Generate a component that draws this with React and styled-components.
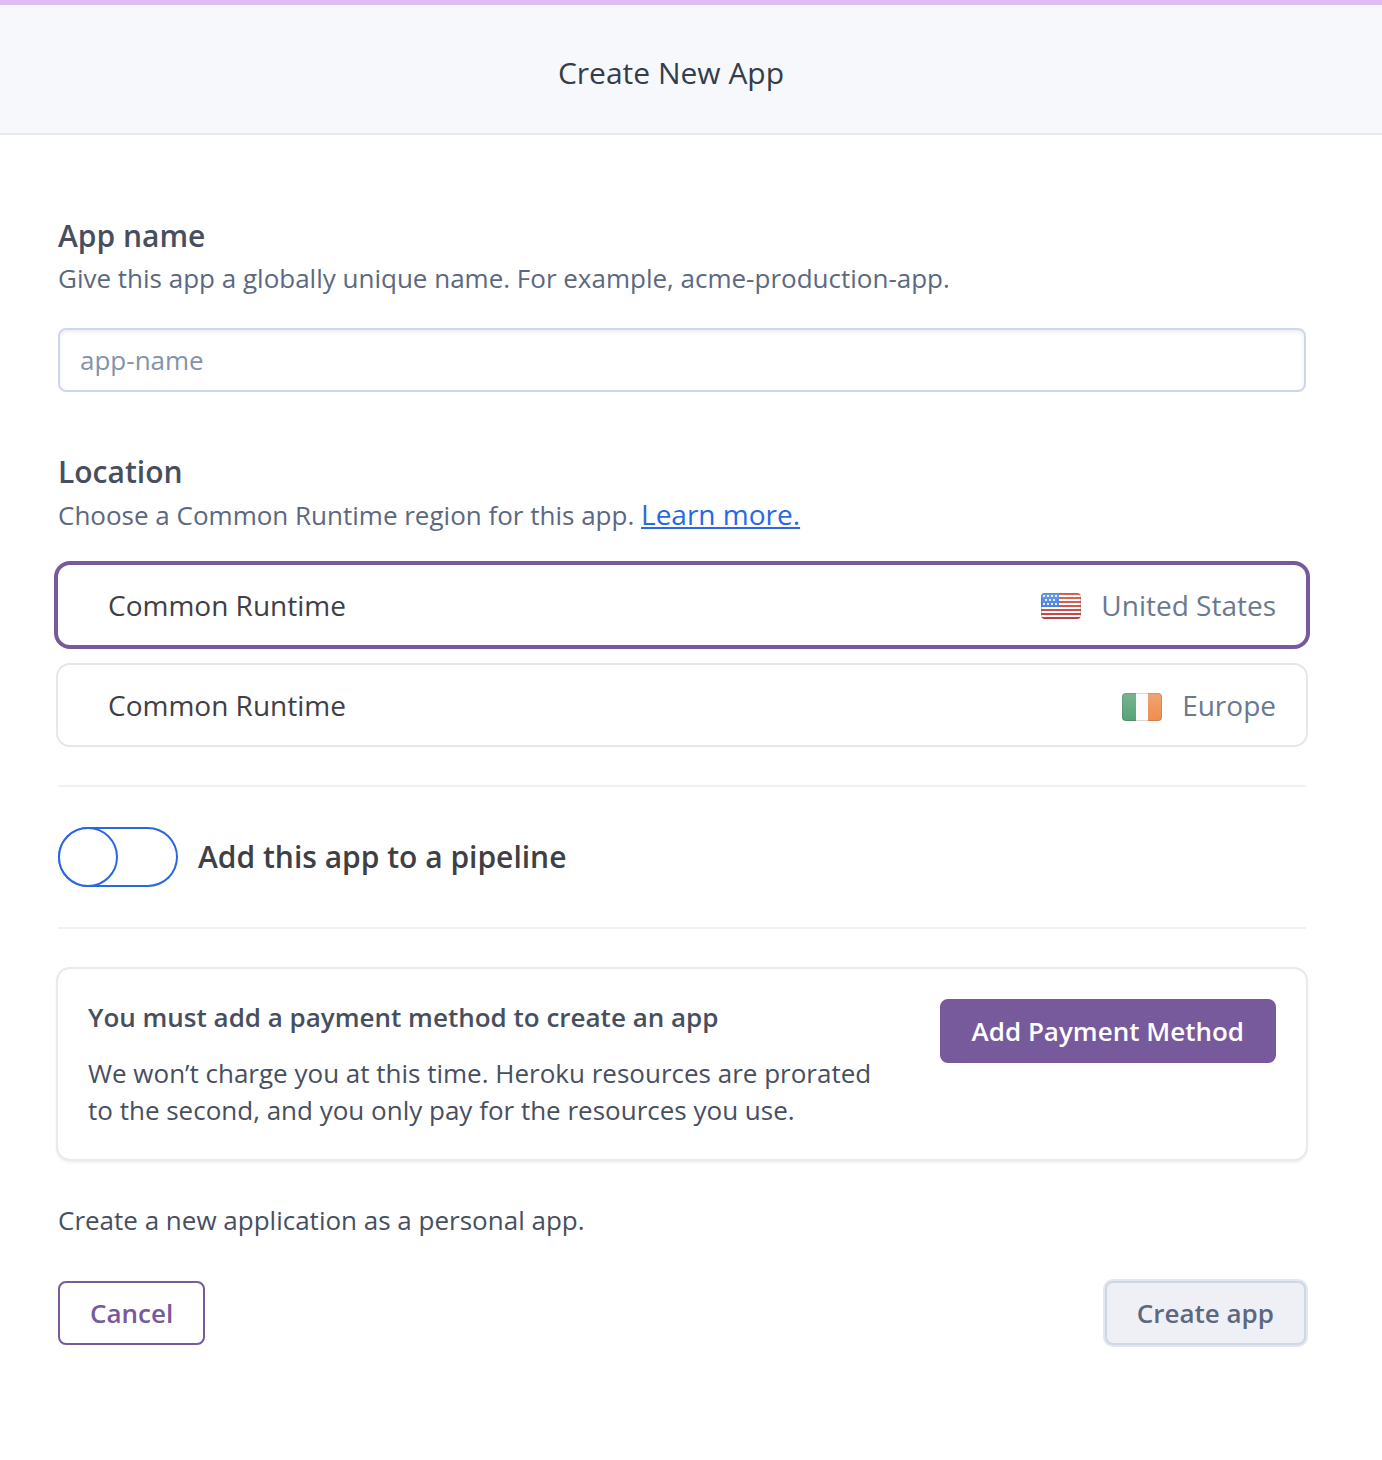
import React, { useState } from 'react';
import styled, { createGlobalStyle } from 'styled-components';

const GlobalStyle = createGlobalStyle`
  *, *::before, *::after {
    box-sizing: border-box;
  }

  body {
    margin: 0;
    background: #ffffff;
    color: #474f5f;
    font-family: 'Open Sans', 'Noto Sans', sans-serif;
    font-size: 26px;
    line-height: 36px;
  }
`

const Header = styled.header`
  border-top: 5px solid #dfbbf8;
  border-bottom: 2px solid #e7ebf0;
  padding: 48px 98px 40px 58px;
  background: #f7f8fc;
  text-align: center;
`

const Title = styled.h1`
  margin: 0;
  color: #353d4b;
  font-size: 30px;
  font-weight: 400;
  line-height: 40px;
`

const Form = styled.form`
  display: flex;
  flex-direction: column;
  padding: 81px 76px 112px 58px;
`

const Field = styled.div`
  display: flex;
  flex-direction: column;
  margin-bottom: 60px;
`

const FieldSet = styled.fieldset`
  min-width: 0;
  margin: 0;
  border: 0;
  padding: 0;
`

const FieldTitle = styled.span`
  display: block;
  font-size: 30px;
  font-weight: 600;
  line-height: 40px;
`

const Hint = styled.p`
  margin: 4px 0 32px;
  color: #5b6880;
`

const Link = styled.a`
  color: #2a67e2;
  font-size: 28px;
  text-decoration: underline;
`

const TextInput = styled.input`
  width: 100%;
  height: 64px;
  border: 2px solid #cfd7e6;
  border-radius: 8px;
  padding: 0 20px;
  background: #ffffff;
  box-shadow: inset 0 2px 4px #e9edf5;
  color: #474f5f;
  font: inherit;

  &::placeholder {
    color: #8493ab;
    opacity: 1;
  }
`

const HiddenInput = styled.input`
  appearance: none;
  position: absolute;
  width: 1px;
  height: 1px;
  margin: 0;
  opacity: 0;
`

const Regions = styled.div`
  display: flex;
  flex-direction: column;
  gap: 20px;
`

const Region = styled.label`
  display: flex;
  align-items: center;
  gap: 20px;
  height: 80px;
  border-radius: 12px;
  padding: 0 30px 0 50px;
  box-shadow: 0 0 0 ${props => props.$selected ? '4px #765a9b' : '2px #e3e7ee'};
  color: #6b7890;
  font-size: 28px;
  cursor: pointer;
`

const Runtime = styled.span`
  flex: 1;
  color: #3f4045;
`

const FlagSvg = styled.svg`
  flex-shrink: 0;
  width: 40px;
  height: 28px;
  margin-top: 4px;
`

const Divider = styled.hr`
  width: 100%;
  height: 2px;
  margin: 40px 0;
  border: 0;
  background: #f0f1f5;
`

const PipelineToggle = styled.label`
  display: flex;
  align-items: center;
  align-self: flex-start;
  gap: 20px;
  color: #3f4045;
  font-size: 30px;
  font-weight: 600;
  cursor: pointer;
`

const Track = styled.span`
  display: flex;
  justify-content: ${props => props.$on ? 'flex-end' : 'flex-start'};
  width: 120px;
  height: 60px;
  border-radius: 30px;
  background: ${props => props.$on ? '#2a67e2' : '#ffffff'};
  box-shadow: inset 0 0 0 2px #2a67e2;
`

const Knob = styled.span`
  width: 60px;
  height: 60px;
  border: 2px solid #2a67e2;
  border-radius: 50%;
  background: #ffffff;
`

const PaymentCard = styled.section`
  display: flex;
  align-items: flex-start;
  justify-content: space-between;
  gap: 60px;
  border-radius: 12px;
  padding: 30px;
  box-shadow: 0 0 0 2px #e8eaee, 0 2px 4px #d9dde3;
`

const PaymentTitle = styled.h2`
  margin: 0 0 20px;
  font-size: 26px;
  font-weight: 600;
  line-height: 36px;
`

const PaymentText = styled.p`
  margin: 0;
  line-height: 37px;
`

const Button = styled.button`
  flex-shrink: 0;
  height: 64px;
  border: 2px solid #765a9b;
  border-radius: 8px;
  padding: 0 30px;
  background: #ffffff;
  color: #765a9b;
  font: inherit;
  font-weight: 600;
  cursor: pointer;
`

const PrimaryButton = styled(Button)`
  background: #765a9b;
  color: #ffffff;
`

const SubmitButton = styled(Button)`
  border-color: #cfd7e6;
  background: #eff0f5;
  box-shadow: 0 0 0 2px #e3e7ee;
  color: #5b6880;
  cursor: default;
`

const Owner = styled.p`
  margin: 43px 0;
`

const Actions = styled.div`
  display: flex;
  justify-content: space-between;
`

const starRows = [
  { y: 2, xs: [2, 6, 10, 14] },
  { y: 6, xs: [4, 8, 12] },
  { y: 10, xs: [2, 6, 10, 14] },
]

const UsFlag = () => (
  <FlagSvg viewBox="0 0 40 28" aria-hidden="true">
    <defs>
      <clipPath id="us-shape"><rect width="40" height="26" rx="4" /></clipPath>
      <linearGradient id="us-canton" x1="0" y1="0" x2="0" y2="1">
        <stop offset="0" stopColor="#6ba3e9" />
        <stop offset="1" stopColor="#4b80dc" />
      </linearGradient>
      <linearGradient id="us-red" x1="0" y1="0" x2="0" y2="26" gradientUnits="userSpaceOnUse">
        <stop offset="0" stopColor="#dc6c5c" />
        <stop offset="1" stopColor="#c2403d" />
      </linearGradient>
    </defs>
    <g clipPath="url(#us-shape)">
      <rect width="40" height="26" fill="#ffffff" />
      {[0, 4, 8, 12, 16, 20, 24].map(y => (
        <rect key={y} y={y} width="40" height="2" fill="url(#us-red)" />
      ))}
      <rect width="18" height="14" fill="url(#us-canton)" />
      {starRows.map(({ y, xs }) => xs.map(x => (
        <rect key={`${x}-${y}`} x={x} y={y} width="2" height="2" fill="#e6f0ff" />
      )))}
      <rect x="0.5" y="0.5" width="39" height="25" rx="3.5" fill="none" stroke="#8a4a4a" strokeOpacity="0.35" />
    </g>
  </FlagSvg>
)

const IrishFlag = () => (
  <FlagSvg viewBox="0 0 40 28" aria-hidden="true">
    <defs>
      <clipPath id="ie-shape"><rect width="40" height="28" rx="4" /></clipPath>
      <linearGradient id="ie-green" x1="0" y1="0" x2="0" y2="1">
        <stop offset="0" stopColor="#7bb491" />
        <stop offset="1" stopColor="#55a374" />
      </linearGradient>
      <linearGradient id="ie-orange" x1="0" y1="0" x2="0" y2="1">
        <stop offset="0" stopColor="#f0a472" />
        <stop offset="1" stopColor="#ef8d4d" />
      </linearGradient>
    </defs>
    <g clipPath="url(#ie-shape)">
      <rect width="40" height="28" fill="#fbfbfc" />
      <rect width="14" height="28" fill="url(#ie-green)" />
      <rect x="26" width="14" height="28" fill="url(#ie-orange)" />
      <rect x="0.5" y="0.5" width="39" height="27" rx="3.5" fill="none" stroke="#4a4a4a" strokeOpacity="0.2" />
    </g>
  </FlagSvg>
)

const regions = [
  { id: 'us', name: 'United States', Flag: UsFlag },
  { id: 'eu', name: 'Europe', Flag: IrishFlag },
]

const App = () => {
  const [appName, setAppName] = useState('');
  const [region, setRegion] = useState('us');
  const [pipeline, setPipeline] = useState(false);

  return (
    <>
      <GlobalStyle />
      <Header>
        <Title>Create New App</Title>
      </Header>
      <Form onSubmit={e => e.preventDefault()}>
        <Field>
          <FieldTitle as="label" htmlFor="app-name">App name</FieldTitle>
          <Hint id="app-name-hint">
            Give this app a globally unique name. For example, acme-production-app.
          </Hint>
          <TextInput
            id="app-name"
            type="text"
            placeholder="app-name"
            aria-describedby="app-name-hint"
            value={appName}
            onChange={e => setAppName(e.target.value)}
          />
        </Field>
        <FieldSet aria-labelledby="location-title">
          <FieldTitle id="location-title">Location</FieldTitle>
          <Hint>
            Choose a Common Runtime region for this app. <Link href="#regions">Learn more.</Link>
          </Hint>
          <Regions id="regions">
            {regions.map(({ id, name, Flag }) => (
              <Region key={id} $selected={region === id}>
                <HiddenInput
                  type="radio"
                  name="region"
                  value={id}
                  checked={region === id}
                  onChange={() => setRegion(id)}
                />
                <Runtime>Common Runtime</Runtime>
                <Flag />
                <span>{name}</span>
              </Region>
            ))}
          </Regions>
        </FieldSet>
        <Divider />
        <PipelineToggle>
          <HiddenInput
            type="checkbox"
            checked={pipeline}
            onChange={e => setPipeline(e.target.checked)}
          />
          <Track $on={pipeline}><Knob /></Track>
          <span>Add this app to a pipeline</span>
        </PipelineToggle>
        <Divider />
        <PaymentCard>
          <div>
            <PaymentTitle>You must add a payment method to create an app</PaymentTitle>
            <PaymentText>
              We won’t charge you at this time. Heroku resources are prorated to the second, and you only pay for the resources you use.
            </PaymentText>
          </div>
          <PrimaryButton type="button">Add Payment Method</PrimaryButton>
        </PaymentCard>
        <Owner>Create a new application as a personal app.</Owner>
        <Actions>
          <Button type="button">Cancel</Button>
          <SubmitButton type="submit" disabled>Create app</SubmitButton>
        </Actions>
      </Form>
    </>
  )
}

export default App;
